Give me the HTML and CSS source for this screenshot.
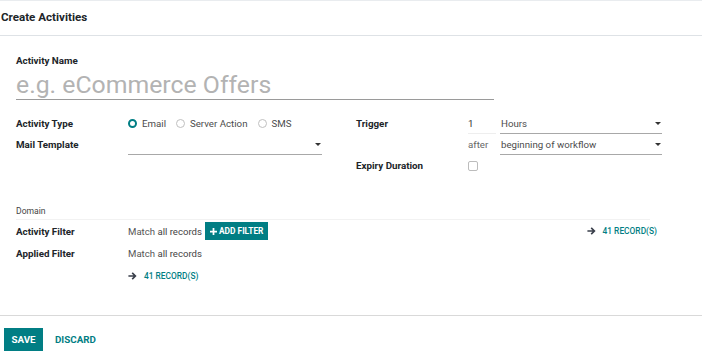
FILE: index.html
```html
<!DOCTYPE html>
<html lang="en">
<head>
    <meta charset="UTF-8">
    <title>Create Activities</title>
    <link rel="stylesheet" href="styles.css">
</head>
<body>

    <!-- Header -->
    <div class="header">
        <h4 class="title">Create Activities</h4>
    </div>

    <!-- Form body -->
    <div class="sheet">
        <label class="name-label">Activity Name</label>
        <div class="name-input">e.g. eCommerce Offers</div>

        <div class="groups">
            <div class="group">
                <div class="lbl">Activity Type</div>
                <div class="field radios">
                    <span class="radio on"></span><span class="opt">Email</span>
                    <span class="radio"></span><span class="opt">Server Action</span>
                    <span class="radio"></span><span class="opt">SMS</span>
                </div>
                <div class="lbl">Mail Template</div>
                <div class="field"><div class="select"><span></span><i class="caret"></i></div></div>
            </div>
            <div class="group">
                <div class="lbl">Trigger</div>
                <div class="field pair">
                    <div class="num">1</div>
                    <div class="select"><span>Hours</span><i class="caret"></i></div>
                </div>
                <div class="lbl"></div>
                <div class="field pair">
                    <div class="after">after</div>
                    <div class="select"><span>beginning of workflow</span><i class="caret"></i></div>
                </div>
                <div class="lbl">Expiry Duration</div>
                <div class="field"><span class="check"></span></div>
            </div>
        </div>

        <div class="domain">Domain</div>
        <div class="filters">
            <div class="lbl">Activity Filter</div>
            <div class="frow">
                <span class="match">Match <b>all records</b></span>
                <button class="add-btn"><svg width="7" height="7" viewBox="0 0 8 8"><path d="M3 0h2v3h3v2H5v3H3V5H0V3h3z" fill="#fff"/></svg>ADD FILTER</button>
                <a class="records right"><svg class="arrow" width="9" height="8" viewBox="0 0 10 9"><path d="M5.3 0.3L9.6 4.5 5.3 8.7 4 7.4 6.1 5.4H0.4V3.6H6.1L4 1.6z" fill="#3a3f4b"/></svg>41 RECORD(S)</a>
            </div>
            <div class="lbl">Applied Filter</div>
            <div class="frow"><span class="match">Match <b>all records</b></span></div>
            <div class="lbl"></div>
            <div class="frow">
                <a class="records"><svg class="arrow" width="9" height="8" viewBox="0 0 10 9"><path d="M5.3 0.3L9.6 4.5 5.3 8.7 4 7.4 6.1 5.4H0.4V3.6H6.1L4 1.6z" fill="#3a3f4b"/></svg>41 RECORD(S)</a>
            </div>
        </div>
    </div>

    <!-- Footer -->
    <div class="footer">
        <button class="save">SAVE</button>
        <button class="discard">DISCARD</button>
    </div>

</body>
</html>
```

FILE: styles.css
```css
* { margin: 0; padding: 0; box-sizing: border-box; }
body {
    font-family: Roboto, "Noto Sans", sans-serif;
    font-size: 9.7px;
    color: #4c4c4c;
    background: white;
    width: 702px;
}

/* Header */
.header {
    height: 36px;
    border-top: 1px solid #e9ecef;
    border-bottom: 1px solid #dee2e6;
    display: flex;
    align-items: center;
    padding-left: 1px;
    padding-bottom: 2px;
}
.title {
    font-size: 11.6px;
    font-weight: 700;
    color: #212529;
}

/* Sheet */
.sheet {
    padding: 18px 16px 0 16px;
    height: 280px;
    border-bottom: 1px solid #d9d9d9;
}
.name-label {
    display: block;
    font-weight: 700;
    color: #212529;
    font-size: 9.8px;
    line-height: 14px;
}
.name-input {
    width: 478px;
    font-size: 24.8px;
    line-height: 28px;
    color: #b3b3b3;
    border-bottom: 1px solid #9a9a9a;
    padding-bottom: 0;
    margin-top: 3px;
}

.groups {
    display: flex;
    gap: 34px;
    margin-top: 13px;
}
.group {
    display: grid;
    grid-template-columns: 112px 194px;
    grid-auto-rows: 21px;
    align-items: center;
}
.lbl {
    font-weight: 700;
    color: #212529;
    font-size: 9.8px;
}
.field { display: flex; align-items: center; height: 21px; }

.radios .opt { margin: 0 10px 0 5px; color: #4c4c4c; }
.radio {
    width: 9px;
    height: 9px;
    border-radius: 50%;
    border: 1px solid #c0c0c0;
    display: inline-block;
}
.radio.on {
    border: 2.5px solid #017e84;
    background: white;
}

.select {
    flex: 1;
    display: flex;
    align-items: center;
    justify-content: space-between;
    height: 20px;
    border-bottom: 1px solid #a8a8a8;
    padding: 0 0 0 1px;
    color: #4c4c4c;
}
.caret {
    width: 0;
    height: 0;
    margin-right: 1px;
    border-left: 3px solid transparent;
    border-right: 3px solid transparent;
    border-top: 3.5px solid #333;
}
.pair { gap: 4px; }
.num {
    width: 28px;
    height: 20px;
    line-height: 19px;
    border-bottom: 1px solid #eeeeee;
    color: #333;
}
.after { width: 28px; color: #666; }
.check {
    width: 10px;
    height: 10px;
    border: 1px solid #bcbcbc;
    border-radius: 2px;
    margin-top: 1px;
}

/* Domain */
.domain {
    margin-top: 30px;
    width: 634px;
    font-size: 8.6px;
    color: #444;
    padding-bottom: 3px;
    border-bottom: 1px solid #f2f2f2;
}
.filters {
    display: grid;
    grid-template-columns: 112px 1fr;
    grid-auto-rows: 22.5px;
    align-items: center;
}
.frow { display: flex; align-items: center; }
.match { color: #555; font-size: 9.6px; }
.match b { font-weight: 400; color: #444; }
.add-btn {
    margin-left: 3px;
    background: #017e84;
    color: white;
    border: none;
    font-family: inherit;
    font-size: 8.4px;
    font-weight: 700;
    height: 18px;
    padding: 0 5px 0 5px;
    display: flex;
    align-items: center;
    gap: 2px;
}
.records {
    color: #017e84;
    font-size: 8.4px;
    font-weight: 500;
    display: flex;
    align-items: center;
}
.records .arrow { margin-right: 7px; }
.records.right { margin-left: auto; margin-right: 29px; }

/* Footer */
.footer {
    display: flex;
    align-items: center;
    padding: 12px 4px 0 4px;
    gap: 2px;
}
.save {
    background: #017e84;
    color: white;
    border: none;
    font-family: inherit;
    font-weight: 700;
    font-size: 9.8px;
    height: 23px;
    width: 39px;
}
.discard {
    background: none;
    border: none;
    color: #017e84;
    font-family: inherit;
    font-weight: 700;
    font-size: 9.8px;
    padding: 0 10px;
}
```
